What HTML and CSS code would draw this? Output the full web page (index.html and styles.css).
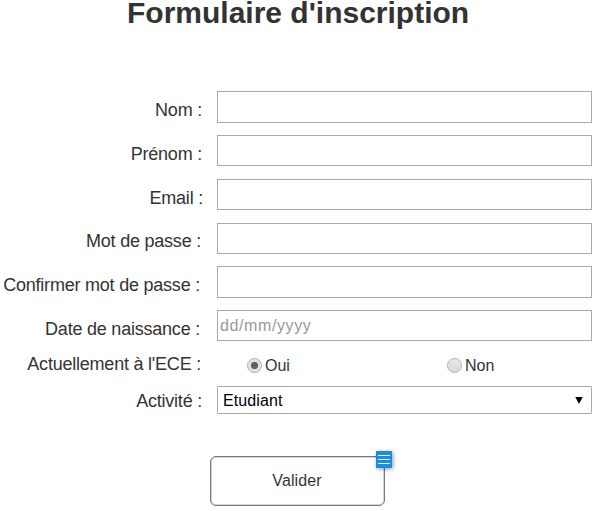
FILE: index.html
```html
<!DOCTYPE html>
<html lang="fr">
<head>
<meta charset="utf-8">
<title>Formulaire d'inscription</title>
<link rel="stylesheet" href="styles.css">
</head>
<body>
<h1 class="title">Formulaire d'inscription</h1>
<form class="form">
  <div class="row row-tall"><label class="label label-mid" for="nom">Nom :</label><input class="field" id="nom" type="text"></div>
  <div class="row"><label class="label label-mid" for="prenom">Prénom :</label><input class="field" id="prenom" type="text"></div>
  <div class="row"><label class="label label-wide" for="email">Email :</label><input class="field" id="email" type="text"></div>
  <div class="row row-mdp"><label class="label label-near label-up" for="mdp">Mot de passe :</label><input class="field" id="mdp" type="password"></div>
  <div class="row row-tall"><label class="label label-far" for="mdp2">Confirmer mot de passe :</label><input class="field" id="mdp2" type="password"></div>
  <div class="row row-date"><label class="label label-far" for="date">Date de naissance :</label><input class="field" id="date" type="text" placeholder="dd/mm/yyyy"></div>
  <div class="row row-radio"><span class="label label-near label-radio">Actuellement à l'ECE :</span>
    <div class="radios">
      <label class="radio"><span class="dot dot-on"></span><span class="choice">Oui</span></label>
      <label class="radio"><span class="dot"></span><span class="choice">Non</span></label>
    </div>
  </div>
  <div class="row row-select"><span class="label label-mid label-select">Activité :</span>
    <div class="field select"><span class="value">Etudiant</span><svg class="arrow" width="8" height="7" viewBox="0 0 8 7"><path d="M.3 0h7.4L4 7z"/></svg></div>
  </div>
  <div class="submit">
    <button class="button" type="button">Valider</button>
    <svg class="note" width="16" height="17" viewBox="0 0 16 17"><path fill="#168fe0" d="M0 0h16v17H0z"/><path fill="#fff" d="M2 4h12v1H2zM2 8h12v1H2zM2 12h12v1H2z"/></svg>
  </div>
</form>
</body>
</html>
```
FILE: styles.css
```css
* { box-sizing: border-box; }
body {
  margin: 0;
  height: 511px;
  overflow: hidden;
  background: #fff;
  color: #333;
  font-family: "Liberation Sans", Arial, sans-serif;
}
.title {
  margin: 0;
  height: 91px;
  padding-left: 127px;
  font-size: 30px;
  line-height: 26px;
  white-space: nowrap;
}
.row { display: flex; height: 31px; margin-bottom: 13px; }
.row-tall { height: 32px; margin-bottom: 12px; }
.row-mdp { margin-bottom: 12px; }
.row-date { margin-bottom: 12px; }
.label {
  width: 217px;
  flex: none;
  padding-top: 3px;
  font-size: 18px;
  line-height: 32px;
  letter-spacing: -.22px;
  text-align: right;
  white-space: nowrap;
}
.label-wide { padding-right: 14px; }
.label-mid { padding-right: 15px; }
.label-near { padding-right: 16px; }
.label-far { padding-right: 17px; }
.label-up { padding-top: 2px; }
.field {
  width: 375px;
  height: 100%;
  margin: 0;
  padding: 0 3px 0 2px;
  border: 1px solid #a9a9a9;
  border-radius: 0;
  outline: none;
  background: #fff;
  color: #000;
  font: 16px "Liberation Sans", Arial, sans-serif;
}
.field::placeholder { color: #999; opacity: 1; letter-spacing: .6px; }
.row-radio { height: 21px; margin-bottom: 12px; }
.label-radio { padding-top: 1px; line-height: 21px; }
.radios { display: flex; padding-left: 30px; gap: 157px; }
.radio {
  display: flex;
  align-items: center;
  height: 24px;
  font-size: 16px;
}
.radio:first-child { width: 43px; }
.choice { padding-top: 1px; }
.dot {
  width: 15px;
  height: 15px;
  margin-right: 3px;
  border: 1px solid #b0b0b0;
  border-radius: 50%;
  background: linear-gradient(#e8e8e8, #d9d9d9);
}
.dot-on { background: radial-gradient(circle, #606060 3.3px, #e2e2e2 4px); }
.row-select { height: 28px; margin-bottom: 42px; }
.label-select { padding-top: 0; line-height: 30px; }
.select {
  display: flex;
  align-items: center;
  justify-content: space-between;
  padding: 0 8px 0 5px;
  border-radius: 1px;
}
.value { padding-top: 2px; letter-spacing: .1px; }
.arrow { margin-top: 1px; }
.submit { position: relative; width: 175px; margin-left: 210px; }
.button {
  display: block;
  width: 175px;
  height: 50px;
  padding: 0 1px 1px 0;
  border: 1px solid #797979;
  border-radius: 6px;
  box-shadow: inset 0 0 0 .5px #aaa;
  background: #fff;
  color: #333;
  font: 16px "Liberation Sans", Arial, sans-serif;
  letter-spacing: .1px;
}
.note { position: absolute; top: -5px; right: -7px; filter: drop-shadow(1px 1px 2px rgba(0, 0, 0, .4)); }
```
